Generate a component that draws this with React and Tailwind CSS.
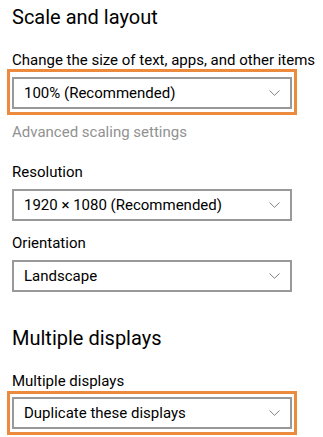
import React from "react";

function Chevron() {
  return (
    <svg width="11" height="6" viewBox="0 0 11 6" className="shrink-0">
      <path d="M0.5 0.5 L5.5 5.3 L10.5 0.5" fill="none" stroke="#808080" strokeWidth="1" />
    </svg>
  );
}

function Select({ value, ring, ringCls }) {
  return (
    <div className="relative w-[280px]">
      {ring && (
        <div className={"absolute border-[3px] border-[#ec8b3e] pointer-events-none " + ringCls} />
      )}
      <div className="h-[32px] border-2 border-[#999999] bg-white flex items-center justify-between pl-[10px] pr-[10px]">
        <span className="text-[15px] leading-[20px] text-black">{value}</span>
        <Chevron />
      </div>
    </div>
  );
}

export default function App() {
  return (
    <div className="w-[323px] h-[437px] bg-white overflow-hidden pl-[12px] font-['Roboto','Liberation_Sans',sans-serif] text-black">
      <h2 className="pt-[3px] text-[20px] leading-[28px] font-normal">Scale and layout</h2>
      <div className="mt-[19px] text-[15px] leading-[20px] whitespace-nowrap">Change the size of text, apps, and other items</div>
      <div className="mt-[7px]">
        <Select value="100% (Recommended)" ring ringCls="-left-[5px] -right-[5px] -top-[8px] -bottom-[6px]" />
      </div>
      <div className="mt-[13px] text-[15px] leading-[20px] text-[#919191]">Advanced scaling settings</div>
      <div className="mt-[20px] text-[15px] leading-[20px]">Resolution</div>
      <div className="mt-[7px]">
        <Select value="1920 × 1080 (Recommended)" />
      </div>
      <div className="mt-[12px] text-[15px] leading-[20px]">Orientation</div>
      <div className="mt-[7px]">
        <Select value="Landscape" />
      </div>
      <h2 className="mt-[32px] text-[20px] leading-[28px] font-normal">Multiple displays</h2>
      <div className="mt-[19px] text-[15px] leading-[20px]">Multiple displays</div>
      <div className="mt-[6px]">
        <Select value="Duplicate these displays" ring ringCls="-left-[5px] -right-[5px] -top-[6px] -bottom-[6px]" />
      </div>
    </div>
  );
}
